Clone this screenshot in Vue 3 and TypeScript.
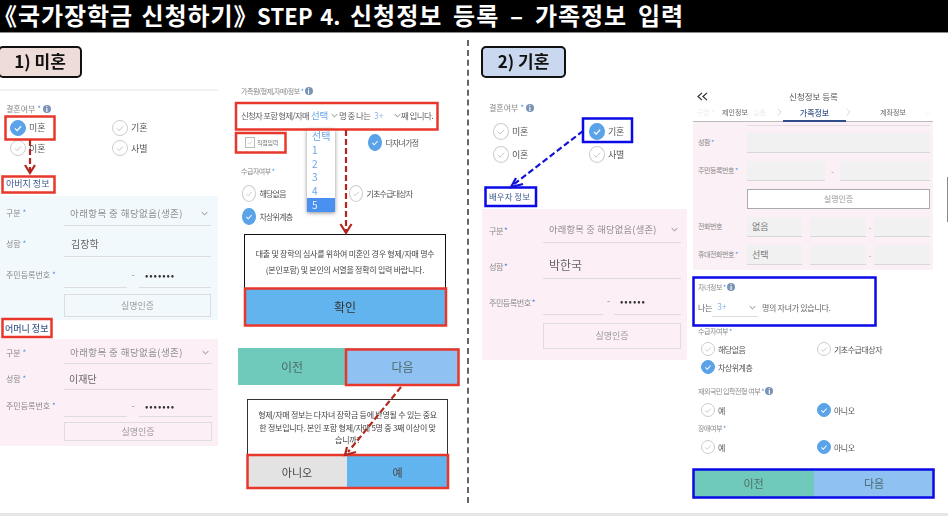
<script setup lang="ts">
interface Option { label: string; on: boolean }

const options = (labels: string[], selected: string[] = []): Option[] =>
  labels.map((label) => ({ label, on: selected.includes(label) }))

const marriedLeft = options(['미혼', '기혼', '이혼', '사별'], ['미혼'])
const marriedRight = options(['미혼', '기혼', '이혼', '사별'], ['기혼'])
const income = options(['해당없음', '기초수급대상자', '차상위계층'], ['차상위계층'])
const yesNo = options(['예', '아니오'], ['아니오'])
const counts = ['선택', '1', '2', '3', '4', '5']

interface Box { x: number; y: number; w: number; h: number }
const redBoxes: Box[] = [
  { x: 5.5, y: 116.5, w: 49, h: 23 },
  { x: 2.5, y: 176.5, w: 52, h: 16 },
  { x: 2.5, y: 319, w: 49, h: 18 },
  { x: 236, y: 103, w: 201.5, h: 26.5 },
  { x: 236, y: 133, w: 49.5, h: 19.5 },
  { x: 245, y: 288.5, w: 201, h: 37 },
  { x: 346, y: 349.5, w: 112.5, h: 35.5 },
  { x: 247.5, y: 455, w: 200.5, h: 33 },
]
const blueBoxes: Box[] = [
  { x: 583, y: 118.5, w: 49, h: 23.5 },
  { x: 485.5, y: 187.5, w: 50.5, h: 18.5 },
  { x: 693.5, y: 277.5, w: 182, h: 48 },
  { x: 693.5, y: 469.5, w: 240, h: 28 },
]
</script>

<template>
  <div class="page">
    <h1 class="title"><span>《국가장학금 신청하기》</span> <span class="t2">STEP 4.</span> <span class="t3">신청정보 등록 – 가족정보 입력</span></h1>

    <main class="slides">
      <section class="col col-a">
        <div class="pill pill-a">1) 미혼</div>
        <hr class="rule" />
        <div class="lab lab-married">결혼여부 <b>*</b> <i class="info">i</i></div>
        <div class="opts opts-a">
          <span v-for="o in marriedLeft" :key="o.label" class="opt" :class="{ on: o.on }">
            <i class="dot"><svg viewBox="0 0 16 16"><path d="M4.5 8.5l2.5 2.5 4.5-5" /></svg></i>{{ o.label }}
          </span>
        </div>
        <div class="head head-father">아버지 정보</div>
        <div class="panel panel-father">
          <div class="row"><span class="lab">구분 <b>*</b></span><div class="field sel">아래항목 중 해당없음(생존)<svg class="chev" viewBox="0 0 10 6"><path d="M1 1l4 4 4-4" /></svg></div></div>
          <div class="row"><span class="lab">성함 <b>*</b></span><div class="field val">김장학</div></div>
          <div class="row"><span class="lab">주민등록번호 <b>*</b></span><div class="id"><div class="field"></div><span class="dash">-</span><div class="field dots">•••••••</div></div></div>
          <div class="verify">실명인증</div>
        </div>
        <div class="head head-mother">어머니 정보</div>
        <div class="panel panel-mother">
          <div class="row"><span class="lab">구분 <b>*</b></span><div class="field sel">아래항목 중 해당없음(생존)<svg class="chev" viewBox="0 0 10 6"><path d="M1 1l4 4 4-4" /></svg></div></div>
          <div class="row"><span class="lab">성함 <b>*</b></span><div class="field val">이재단</div></div>
          <div class="row"><span class="lab">주민등록번호 <b>*</b></span><div class="id"><div class="field"></div><span class="dash">-</span><div class="field dots">•••••••</div></div></div>
          <div class="verify">실명인증</div>
        </div>
      </section>

      <section class="col col-b">
        <div class="lab">가족원(형제,자매)정보 <b>*</b> <i class="info">i</i></div>
        <div class="sentence">
          <span class="s1">신청자 포함 형제/자매</span>
          <span class="s2">선택</span>
          <svg class="chev inline" viewBox="0 0 10 6"><path d="M1 1l4 4 4-4" /></svg>
          <span class="s3">명 중 나는</span>
          <span class="s4">3+</span>
          <svg class="chev inline c2" viewBox="0 0 10 6"><path d="M1 1l4 4 4-4" /></svg>
          <span class="s5">째 입니다.</span>
        </div>
        <div class="direct">
          <span class="check"><i class="box"><svg viewBox="0 0 16 16"><path d="M4 8.5l3 3 5-6" /></svg></i>직접입력</span>
          <span class="opt on tall"><i class="dot"><svg viewBox="0 0 16 16"><path d="M4.5 8.5l2.5 2.5 4.5-5" /></svg></i>다자녀가정</span>
        </div>
        <div class="lab lab-income">수급자여부 <b>*</b></div>
        <div class="opts opts-b">
          <span v-for="o in income" :key="o.label" class="opt tall" :class="{ on: o.on }">
            <i class="dot"><svg viewBox="0 0 16 16"><path d="M4.5 8.5l2.5 2.5 4.5-5" /></svg></i>{{ o.label }}
          </span>
        </div>
        <div class="modal modal-one">
          <p>대출 및 장학의 심사를 위하여 미혼인 경우 형제/자매 명수<br />(본인포함) 및 본인의 서열을 정확히 입력 바랍니다.</p>
        </div>
        <div class="confirm">확인</div>
        <div class="nav nav-b"><span class="prev">이전</span><span class="next">다음</span></div>
        <div class="modal modal-two">
          <p>형제/자매 정보는 다자녀 장학금 등에 반영될 수 있는 중요<br />한 정보입니다. 본인 포함 형제/자매 5명 중 3째 이상이 맞<br />습니까?</p>
        </div>
        <div class="answer"><span class="no">아니오</span><span class="yes">예</span></div>
        <ul class="dropdown">
          <li v-for="c in counts" :key="c" :class="{ picked: c === '5' }">{{ c }}</li>
        </ul>
      </section>

      <div class="divider"></div>

      <section class="col col-c">
        <div class="pill pill-c">2) 기혼</div>
        <div class="lab lab-married-c">결혼여부 <b>*</b> <i class="info">i</i></div>
        <div class="opts opts-c">
          <span v-for="o in marriedRight" :key="o.label" class="opt" :class="{ on: o.on }">
            <i class="dot"><svg viewBox="0 0 16 16"><path d="M4.5 8.5l2.5 2.5 4.5-5" /></svg></i>{{ o.label }}
          </span>
        </div>
        <div class="head head-spouse">배우자 정보</div>
        <div class="panel panel-spouse">
          <div class="row"><span class="lab">구분 <b>*</b></span><div class="field sel">아래항목 중 해당없음(생존)<svg class="chev" viewBox="0 0 10 6"><path d="M1 1l4 4 4-4" /></svg></div></div>
          <div class="row"><span class="lab">성함 <b>*</b></span><div class="field val">박한국</div></div>
          <div class="row"><span class="lab">주민등록번호 <b>*</b></span><div class="id"><div class="field"></div><span class="dash">-</span><div class="field dots">••••••</div></div></div>
          <div class="verify">실명인증</div>
        </div>
      </section>

      <section class="col col-d">
        <div class="top">
          <svg class="back" viewBox="0 0 12 10"><path d="M5.500 1L1 5l4.500 4M11 1L6.500 5 11 9" /></svg>
          <span>신청정보 등록</span>
        </div>
        <div class="tabs">
          <span class="ghost g1">구분 *</span>
          <span class="ghost g2">실중</span>
          <svg class="ghost g3" viewBox="0 0 10 6"><path d="M1 1l4 4 4-4" /></svg>
          <span class="tab t1">제인정보</span>
          <svg class="gt" viewBox="0 0 6 10"><path d="M1 1l4 4-4 4" /></svg>
          <span class="tab current">가족정보</span>
          <svg class="gt" viewBox="0 0 6 10"><path d="M1 1l4 4-4 4" /></svg>
          <span class="tab t3">계좌정보</span>
        </div>
        <div class="panel panel-form">
          <div class="frow"><span class="lab">성함 <b>*</b></span><div class="inp"></div></div>
          <div class="frow"><span class="lab">주민등록번호 <b>*</b></span><div class="pair"><div class="inp"></div><span class="dash">-</span><div class="inp"></div></div></div>
          <div class="frow"><span></span><div class="verify white">실명인증</div></div>
          <div class="frow"><span class="lab">전화번호</span><div class="tri"><div class="inp">없음</div><div class="inp"></div><span class="dash">-</span><div class="inp"></div></div></div>
          <div class="frow"><span class="lab">휴대전화번호 <b>*</b></span><div class="tri"><div class="inp">선택</div><div class="inp"></div><span class="dash">-</span><div class="inp"></div></div></div>
        </div>
        <div class="lab lab-child">자녀정보 <b>*</b> <i class="info">i</i></div>
        <div class="children">
          <span>나는</span>
          <span class="kids">3+<svg class="chev" viewBox="0 0 10 6"><path d="M1 1l4 4 4-4" /></svg></span>
          <span>명의 자녀가 있습니다.</span>
        </div>
        <div class="lab lab-income-d">수급자여부 <b>*</b></div>
        <div class="opts opts-d">
          <span v-for="o in income" :key="o.label" class="opt" :class="{ on: o.on }">
            <i class="dot"><svg viewBox="0 0 16 16"><path d="M4.5 8.5l2.5 2.5 4.5-5" /></svg></i>{{ o.label }}
          </span>
        </div>
        <div class="lab lab-abroad">재외국민 입학전형 여부 <b>*</b> <i class="info">i</i></div>
        <div class="opts opts-d one">
          <span v-for="o in yesNo" :key="o.label" class="opt" :class="{ on: o.on }">
            <i class="dot"><svg viewBox="0 0 16 16"><path d="M4.5 8.5l2.5 2.5 4.5-5" /></svg></i>{{ o.label }}
          </span>
        </div>
        <div class="lab lab-disabled">장애여부 <b>*</b></div>
        <div class="opts opts-d one">
          <span v-for="o in yesNo" :key="o.label" class="opt" :class="{ on: o.on }">
            <i class="dot"><svg viewBox="0 0 16 16"><path d="M4.5 8.5l2.5 2.5 4.5-5" /></svg></i>{{ o.label }}
          </span>
        </div>
        <div class="nav nav-d"><span class="prev">이전</span><span class="next">다음</span></div>
      </section>
    </main>

    <div class="strip"></div>
    <div class="thumb"></div>

    <svg class="marks" viewBox="0 0 948 516" width="948" height="516">
      <rect v-for="(b, i) in redBoxes" :key="'r' + i" class="red" :x="b.x" :y="b.y" :width="b.w" :height="b.h" />
      <rect v-for="(b, i) in blueBoxes" :key="'b' + i" class="blue" :x="b.x" :y="b.y" :width="b.w" :height="b.h" />
      <path class="dark dashed" d="M30 140V172" />
      <path class="dark" d="M25 165l5 8 5-8" />
      <path class="dark dashed" d="M346 130V233" />
      <path class="dark" d="M340.500 224l5.500 9 5.500-9" />
      <path class="dark dashed" d="M401 387L348 452" />
      <path class="dark" d="M347 447l-2 8 11-3" />
      <path class="navy dashed" d="M583 131L513 185" />
      <path class="navy" d="M516 178l-5 9 12-3" />
    </svg>
  </div>
</template>

<style>
html, body { margin: 0; background: #fff; }
</style>

<style scoped>
.page {
  position: relative;
  width: 948px;
  height: 516px;
  overflow: hidden;
  display: flex;
  flex-direction: column;
  background: #fff;
  font-family: "Noto Sans CJK KR", "Noto Sans", sans-serif;
  color: #555;
}
.title {
  flex: none;
  box-sizing: border-box;
  height: 33px;
  margin: 0;
  background: #000;
  border-bottom: 1.5px solid #888;
  color: #fff;
  font-size: 24px;
  font-weight: 700;
  line-height: 30px;
  letter-spacing: 0.95px;
  white-space: pre;
  text-indent: -7px;
  word-spacing: 2px;
}
.t2 { margin-left: -10px; font-size: 22px; letter-spacing: 0.2px; }
.t3 { margin-left: 1px; word-spacing: 4.500px; }
.slides {
  flex: 1;
  min-height: 0;
  display: grid;
  grid-template-columns: 238px 229px 15px 211px 255px;
  filter: blur(0.4px);
}
.col { position: relative; min-width: 0; }
.divider {
  margin: 7px 0 10px;
  border-left: 2px dashed #666;
}
.strip { flex: none; height: 3px; background: #e6e6e6; }
.thumb {
  position: absolute;
  right: 0;
  top: 177px;
  width: 1.5px;
  height: 45px;
  background: #888;
}
.marks { position: absolute; left: 0; top: 0; pointer-events: none; }
.marks rect { fill: none; stroke-width: 2.5; }
.marks .red { stroke: #e8372b; }
.marks .blue { stroke: #0a0ae6; }
.marks path { fill: none; stroke-width: 2.2; }
.marks .dark { stroke: #b3261e; }
.marks .navy { stroke: #1212d8; }
.marks .dashed { stroke-dasharray: 6 3; }

.pill {
  box-sizing: border-box;
  height: 32px;
  margin-top: 13px;
  border: 2px solid #111;
  border-radius: 5px;
  color: #111;
  font-size: 17px;
  font-weight: 700;
  line-height: 26px;
  text-align: center;
}
.pill-a { width: 84px; margin-left: -2px; background: #eddcd8; }
.pill-c { width: 85px; margin-left: -1px; background: #c9d8ee; }
.rule { height: 1.5px; margin: 11px 0 0; border: 0; background: #f2f2f2; width: 218px; }

.lab {
  display: block;
  font-size: 8px;
  line-height: 12px;
  color: #888;
  white-space: nowrap;
}
.lab b { font-weight: 400; color: #4a90e2; }
.info {
  display: inline-block;
  width: 8px;
  height: 8px;
  border-radius: 50%;
  background: #7b93b5;
  color: #fff;
  font-size: 7px;
  font-style: normal;
  font-weight: 700;
  line-height: 8px;
  text-align: center;
  letter-spacing: 0;
}
.lab-married { margin: 12px 0 0 6px; }

.opts { display: grid; }
.opt {
  display: flex;
  align-items: center;
  gap: 3px;
  color: #555;
  white-space: nowrap;
}
.dot {
  flex: none;
  box-sizing: border-box;
  display: block;
  border: 1px solid #ccc;
  border-radius: 50%;
  background: #fff;
}
.dot svg { display: block; width: 100%; height: 100%; }
.dot path { fill: none; stroke: #bbb; stroke-width: 1; }
.opt.on .dot { background: #5aa3e8; border-color: #5aa3e8; }
.opt.on .dot path { stroke: #fff; stroke-width: 1.4; }
.opts-a {
  width: 208px;
  margin: 3px 0 0 10px;
  grid-template-columns: 102px 98px;
  grid-auto-rows: 20.5px;
  font-size: 9px;
}
.opts-a .dot { width: 16px; height: 16px; }
.head { font-size: 9px; color: #3f5a8f; white-space: nowrap; }
.head-father { margin: 18px 0 0 6px; line-height: 14px; height: 14px; }
.panel { box-sizing: border-box; }
.panel-father {
  width: 218px;
  height: 124px;
  margin-top: 5px;
  padding: 5px 7px 0 6px;
  background: #f2f9fd;
}
.row {
  display: grid;
  grid-template-columns: 58px 1fr;
  align-items: center;
  height: 25px;
  margin-bottom: 6px;
}
.field {
  position: relative;
  box-sizing: border-box;
  height: 100%;
  border-bottom: 1px solid #dcdcdc;
  white-space: nowrap;
}
.sel { padding-left: 6px; font-size: 9.5px; line-height: 24px; letter-spacing: 0.4px; color: #8d8d8d; }
.val { padding-left: 7px; font-size: 10px; line-height: 24px; color: #666; }
.panel-mother .val { padding-left: 5px; }
.chev { fill: none; stroke: #666; stroke-width: 1.1; width: 7px; height: 5px; }
.sel .chev { position: absolute; right: 3px; top: 10px; }
.id { display: grid; grid-template-columns: 63px 12px 1fr; height: 100%; }
.dash { font-size: 9px; line-height: 24px; text-align: center; color: #888; }
.dots { padding-left: 6px; font-size: 10px; line-height: 24px; color: #333; letter-spacing: 0.9px; }
.verify {
  box-sizing: border-box;
  margin: 0 0 0 58px;
  height: 23px;
  border: 1px solid #ddd;
  color: #999;
  font-size: 9px;
  line-height: 21px;
  text-align: center;
}
.head-mother { height: 17px; line-height: 17px; margin: 0 0 2px 5px; color: #3f5a8f; font-weight: 500; }
.panel-mother {
  width: 218px;
  height: 107px;
  padding: 3px 6px 0 6px;
  background: #fcf0f6;
}
.panel-mother .row { height: 22px; margin-bottom: 4.5px; }
.panel-mother .sel,
.panel-mother .val,
.panel-mother .dash,
.panel-mother .dots { line-height: 21px; }
.panel-mother .verify { height: 19px; line-height: 17px; margin-top: 5.5px; }
.panel-mother .sel .chev { top: 8px; }

.col-b { padding: 52px 0 0 3px; box-sizing: border-box; }
.col-b .lab { font-size: 7px; letter-spacing: -0.5px; }
.col-b .opt { font-size: 8px; letter-spacing: -0.8px; gap: 3.500px; }
.sentence {
  position: relative;
  display: flex;
  align-items: center;
  height: 20px;
  margin-top: 8px;
  font-size: 8.5px;
  color: #666;
  white-space: nowrap;
}
.s1 { width: 70px; letter-spacing: -0.8px; }
.s2 { width: 20px; color: #6aa5ea; font-size: 9.5px; letter-spacing: -0.3px; }
.sentence .inline { width: 7px; }
.s3 { margin-left: 1px; width: 35px; letter-spacing: -0.6px; }
.s4 { width: 20px; color: #8fb6ea; }
.c2 { margin-right: 1px; }
.s5 { margin-left: -1px; letter-spacing: -0.6px; }
.direct {
  display: grid;
  grid-template-columns: 123px 80px;
  height: 18px;
  margin-top: 8px;
  padding-left: 4px;
}
.check { display: flex; align-items: center; gap: 2px; font-size: 6px; letter-spacing: -0.3px; color: #777; }
.box { display: block; width: 8px; height: 9px; border: 1px solid #bbb; background: #fff; }
.box svg { display: block; width: 100%; height: 100%; }
.box path { fill: none; stroke: #aaa; stroke-width: 1; }
.tall .dot { width: 14px; height: 17px; }
.lab-income { margin-top: 14px; }
.opts-b {
  grid-template-columns: 107px 107px;
  grid-auto-rows: 23px;
  margin-top: 5px;
  padding-left: 1px;
}
.modal {
  box-sizing: border-box;
  background: #fff;
  text-align: center;
  color: #444;
}
.modal p { margin: 0; white-space: nowrap; }
.modal-one {
  width: 202px;
  height: 54px;
  margin: 6px 0 0 3px;
  padding-top: 11px;
  border: 1.5px solid #111;
  border-bottom: 0;
  font-size: 8px;
  line-height: 16px;
  letter-spacing: -0.25px;
}
.confirm {
  box-sizing: border-box;
  width: 202px;
  height: 38px;
  margin-left: 3px;
  background: #62b4ee;
  color: #333;
  font-size: 12px;
  line-height: 38px;
  text-align: center;
}
.nav { display: grid; text-align: center; color: #4c6b66; }
.nav-b {
  grid-template-columns: 108px 113px;
  width: 221px;
  height: 37px;
  margin: 22px 0 0 -3px;
  font-size: 12px;
  line-height: 37px;
}
.prev { background: #6fcabb; }
.next { background: #8fc1f2; }
.modal-two {
  width: 201px;
  height: 56px;
  margin: 14px 0 0 6px;
  padding-top: 9px;
  border: 1.5px solid #333;
  border-bottom: 0;
  font-size: 8px;
  line-height: 12.5px;
  letter-spacing: -0.25px;
}
.answer {
  display: grid;
  grid-template-columns: 100px 101px;
  width: 201px;
  height: 34px;
  margin-left: 6px;
  font-size: 11px;
  line-height: 34px;
  text-align: center;
  color: #444;
}
.no { background: #e3e3e3; }
.yes { background: #62b4ee; }
.dropdown {
  position: absolute;
  left: 69px;
  top: 96px;
  width: 28px;
  height: 83px;
  margin: 0;
  padding: 0;
  list-style: none;
  background: #fff;
  box-shadow: 0 1px 4px rgba(0, 0, 0, 0.45);
  color: #6aa5ea;
  font-size: 10px;
}
.dropdown li { height: 13.8px; padding-left: 5px; line-height: 13.8px; }
.dropdown li.picked { background: #4a90f0; color: #e6f0ff; }

.lab-married-c { margin: 24px 0 0 7px; }
.opts-c {
  margin: 6px 0 0 11px;
  grid-template-columns: 96px 96px;
  grid-auto-rows: 23px;
  font-size: 9px;
  letter-spacing: -0.3px;
}
.opts-c .dot { width: 16px; height: 17px; }
.head-spouse { margin: 23px 0 0 7px; height: 14px; line-height: 14px; font-size: 8.5px; }
.panel-spouse {
  width: 205px;
  height: 151px;
  margin-top: 6px;
  padding: 7px 6px 0 7px;
  background: #fcf0f6;
}
.panel-spouse .row { height: 27px; margin-bottom: 9px; grid-template-columns: 54px 1fr; }
.panel-spouse .lab { font-size: 8.2px; letter-spacing: -0.6px; }
.panel-spouse .sel { font-size: 9.3px; line-height: 26px; letter-spacing: 0.2px; }
.panel-spouse .val { padding-left: 6px; font-size: 12px; line-height: 26px; }
.panel-spouse .dash,
.panel-spouse .dots { line-height: 26px; }
.panel-spouse .sel .chev { top: 11px; }
.panel-spouse .id { grid-template-columns: 60px 11px 1fr; }
.panel-spouse .verify { height: 26px; line-height: 24px; margin: -1px 0 0 54px; font-size: 9px; }

.col-d { padding-top: 54px; width: 241px; box-sizing: content-box; }
.col-d .lab { font-size: 7px; letter-spacing: -0.45px; }
.col-d .opt { font-size: 8px; letter-spacing: -0.5px; }
.top {
  position: relative;
  height: 18px;
  color: #555;
  font-size: 8.5px;
  line-height: 18px;
  text-align: center;
}
.back {
  position: absolute;
  left: 4px;
  top: 4.500px;
  width: 11px;
  height: 9px;
  fill: none;
  stroke: #333;
  stroke-width: 1.4;
}
.tabs {
  position: relative;
  box-sizing: border-box;
  display: grid;
  grid-template-columns: 84px 6px 63px 6px 81px;
  align-items: center;
  height: 17px;
  width: 240px;
  border-bottom: 1px solid #bbb;
  font-size: 7px;
  text-align: center;
  color: #666;
}
.ghost { position: absolute; top: 2px; color: #ececec; white-space: nowrap; }
.g1 { left: 4px; }
.g2 { left: 60px; }
.g3 { left: 232px; top: 7px; width: 6px; height: 4px; fill: none; stroke: #ececec; stroke-width: 1; }
.t1, .t3 { padding-bottom: 4px; }
.gt { width: 5px; height: 8px; margin-bottom: 3px; fill: none; stroke: #bbb; stroke-width: 0.8; }
.tab.current {
  height: 17px;
  line-height: 15px;
  box-sizing: border-box;
  border-bottom: 2px solid #2f4d8a;
  color: #3f5a8f;
  font-weight: 500;
  font-size: 8px;
}
.panel-form {
  position: relative;
  width: 240px;
  height: 148px;
  padding: 11px 3px 0 0;
  background: #fbf0f5;
}
.panel-form::before {
  content: "";
  position: absolute;
  left: 54px;
  right: 3px;
  top: 2.500px;
  height: 1px;
  background: #e2dde0;
}
.frow {
  display: grid;
  grid-template-columns: 54px 1fr;
  align-items: stretch;
  height: 20px;
  margin-bottom: 8px;
}
.frow .lab { padding-left: 5px; line-height: 18px; }
.inp {
  box-sizing: border-box;
  background: #f1f1f1;
  border-bottom: 1px solid #d8d8d8;
  padding-left: 5px;
  font-size: 9px;
  line-height: 19px;
  color: #777;
}
.pair { display: grid; grid-template-columns: 78px 15px 1fr; }
.tri { display: grid; grid-template-columns: 55px 64px 8px 56px; }
.tri .inp:nth-child(2) { margin-left: 8px; }
.frow .dash { line-height: 20px; font-size: 7px; }
.verify.white {
  margin: 0;
  height: 20px;
  background: #fff;
  border-color: #aaa;
  font-size: 8px;
  line-height: 18px;
}
.lab-child { margin: 11px 0 0 5px; }
.children {
  display: flex;
  align-items: center;
  gap: 4px;
  height: 20px;
  margin-top: 4px;
  padding-left: 5px;
  font-size: 8px;
  letter-spacing: -0.3px;
  color: #666;
  white-space: nowrap;
}
.children > span:first-child { width: 10px; }
.kids {
  box-sizing: border-box;
  position: relative;
  width: 46px;
  height: 20px;
  padding-left: 5px;
  border-bottom: 1px solid #ddd;
  color: #8fb6ea;
  font-size: 9px;
  line-height: 20px;
}
.kids .chev { position: absolute; right: 2px; top: 8px; }
.lab-income-d { margin: 8px 0 0 5px; }
.opts-d {
  grid-template-columns: 116px 100px;
  grid-auto-rows: 18px;
  margin-top: 3px;
  padding-left: 8px;
}
.opts-d .dot { width: 14px; height: 14px; }
.lab-abroad { margin: 9px 0 0 5px; }
.opts-d.one { margin-top: 4px; }
.lab-disabled { margin: 3px 0 0 5px; }
.nav-d {
  grid-template-columns: 121px 120px;
  width: 241px;
  height: 29px;
  margin-top: 13px;
  font-size: 11px;
  line-height: 29px;
}
</style>
